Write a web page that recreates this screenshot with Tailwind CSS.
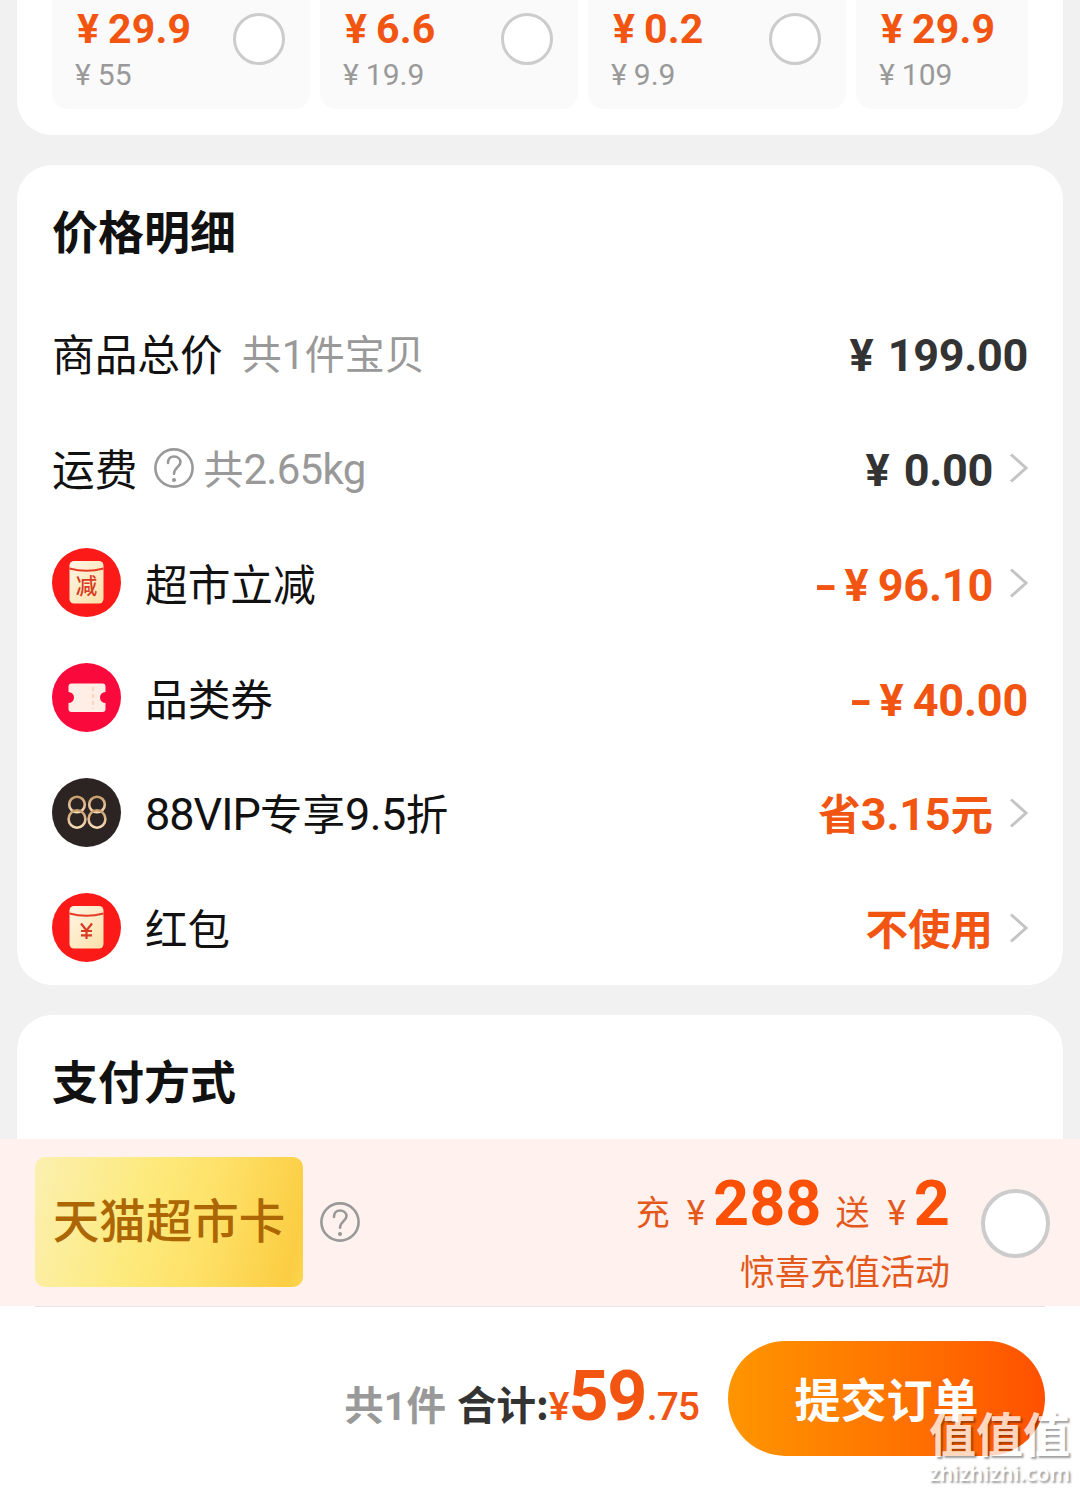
<!DOCTYPE html>
<html lang="zh-CN">
<head>
<meta charset="utf-8">
<title>确认订单</title>
<script src="https://cdn.jsdelivr.net/npm/@tailwindcss/browser@4"></script>
</head>
<body class="bg-[#f1f1f1]">
<svg class="hidden">
  <symbol id="chev" viewBox="0 0 20 32"><path d="M3 2.500 L18 16 L3 29.500" fill="none" stroke="#c4c4c4" stroke-width="3"/></symbol>
  <symbol id="help" viewBox="0 0 40 40"><circle cx="20" cy="20" r="18.600" fill="none" stroke="#999" stroke-width="2.600"/><path d="M14 15 C14 11 16.500 8.500 20 8.500 C23.700 8.500 26.500 11 26.500 14.300 C26.500 18.600 20 19.500 20 25.800" fill="none" stroke="#999" stroke-width="2.600" stroke-linecap="round"/><circle cx="20" cy="32" r="2.100" fill="#999"/></symbol>
</svg>
<div class="relative flex h-[1492px] w-[1080px] flex-col overflow-hidden font-['Noto_Sans_CJK_SC',sans-serif] text-[#111]">

  <section class="mx-[17px] flex h-[135px] shrink-0 gap-[10px] rounded-b-[35px] bg-white pr-[35px] pb-[26px] pl-[35px]">
    <div class="flex w-[258px] justify-between rounded-b-[16px] bg-[#fafafa] pt-[8px] pr-[25px] pl-[25px]">
      <div class="font-['Roboto',sans-serif]">
        <p class="text-[41px] leading-[42px] font-bold text-[#f15511]">¥<span class="ml-[9px] tracking-[0.2px]">29.9</span></p>
        <p class="mt-[6px] -ml-[2px] text-[30px] leading-[38px] text-[#999]">¥<span class="ml-[7px]">55</span></p>
      </div>
      <div class="mt-[5px] size-[52px] rounded-full border-3 border-[#ccc] bg-white"></div>
    </div>
    <div class="flex w-[258px] justify-between rounded-b-[16px] bg-[#fafafa] pt-[8px] pr-[25px] pl-[25px]">
      <div class="font-['Roboto',sans-serif]">
        <p class="text-[41px] leading-[42px] font-bold text-[#f15511]">¥<span class="ml-[9px] tracking-[0.2px]">6.6</span></p>
        <p class="mt-[6px] -ml-[2px] text-[30px] leading-[38px] text-[#999]">¥<span class="ml-[7px]">19.9</span></p>
      </div>
      <div class="mt-[5px] size-[52px] rounded-full border-3 border-[#ccc] bg-white"></div>
    </div>
    <div class="flex w-[258px] justify-between rounded-b-[16px] bg-[#fafafa] pt-[8px] pr-[25px] pl-[25px]">
      <div class="font-['Roboto',sans-serif]">
        <p class="text-[41px] leading-[42px] font-bold text-[#f15511]">¥<span class="ml-[9px] tracking-[0.2px]">0.2</span></p>
        <p class="mt-[6px] -ml-[2px] text-[30px] leading-[38px] text-[#999]">¥<span class="ml-[7px]">9.9</span></p>
      </div>
      <div class="mt-[5px] size-[52px] rounded-full border-3 border-[#ccc] bg-white"></div>
    </div>
    <div class="flex w-[172px] rounded-b-[16px] bg-[#fafafa] pt-[8px] pl-[25px]">
      <div class="font-['Roboto',sans-serif]">
        <p class="text-[41px] leading-[42px] font-bold text-[#f15511]">¥<span class="ml-[9px] tracking-[0.2px]">29.9</span></p>
        <p class="mt-[6px] -ml-[2px] text-[30px] leading-[38px] text-[#999]">¥<span class="ml-[7px]">109</span></p>
      </div>
    </div>
  </section>

  <section class="mx-[17px] mt-[30px] h-[820px] shrink-0 rounded-[35px] bg-white px-[35px]">
    <h2 class="h-[130px] pt-[34px] text-[46px] leading-[60px] font-bold">价格明细</h2>

    <div class="flex h-[115px] items-center">
      <span class="pb-[2px] text-[42.700px] leading-[60px]">商品总价</span>
      <span class="ml-[19px] pb-[2px] text-[40px] leading-[60px] text-[#999]">共<span class="font-['Roboto'] text-[41px] leading-none">1</span>件宝贝</span>
      <span class="ml-auto pb-[2px] text-[43px] leading-[60px] font-bold text-[#333]"><span class="font-['Roboto'] text-[45px] leading-none">¥<span class="ml-[14px] tracking-[-0.3px]">199.00</span></span></span>
    </div>
    <div class="flex h-[115px] items-center">
      <span class="pb-[2px] text-[42.700px] leading-[60px]">运费</span>
      <svg class="ml-[17px] size-[40px]"><use href="#help"/></svg>
      <span class="ml-[9px] pb-[2px] text-[40px] leading-[60px] text-[#999]">共<span class="font-['Roboto'] text-[42px] leading-none tracking-[-0.700px]">2.65kg</span></span>
      <span class="ml-auto pb-[2px] text-[43px] leading-[60px] font-bold text-[#333]"><span class="font-['Roboto'] text-[45px] leading-none">¥<span class="ml-[14px] tracking-[-0.3px]">0.00</span></span></span>
      <svg class="ml-[15px] h-[32px] w-[20px]"><use href="#chev"/></svg>
    </div>
    <div class="flex h-[115px] items-center">
      <svg class="size-[69px]" viewBox="0 0 69 69">
        <defs><linearGradient id="env" x1="0" y1="0" x2="1" y2="1"><stop offset="0" stop-color="#fff6e6"/><stop offset="1" stop-color="#fbe0a8"/></linearGradient></defs>
        <circle cx="34.500" cy="34.500" r="34.500" fill="#fb1a17"/>
        <rect x="17.500" y="13" width="34" height="42.500" rx="4.500" fill="url(#env)"/>
        <path d="M17.500 20.500 Q34.500 25 51.500 20.500" fill="none" stroke="#e33b24" stroke-width="2"/>
        <text x="34.500" y="46" text-anchor="middle" font-size="21.500" font-weight="500" fill="#d83a22">减</text>
      </svg>
      <span class="ml-[24px] pb-[2px] text-[42.700px] leading-[60px]">超市立减</span>
      <span class="ml-auto pb-[2px] text-[43px] leading-[60px] font-bold text-[#f15511]"><span class="font-['Roboto'] text-[45px] leading-none"><span class="inline-block scale-x-140">-</span><span class="ml-[10px]">¥</span><span class="ml-[9px] tracking-[-0.2px]">96.10</span></span></span>
      <svg class="ml-[15px] h-[32px] w-[20px]"><use href="#chev"/></svg>
    </div>
    <div class="flex h-[115px] items-center">
      <svg class="size-[69px]" viewBox="0 0 69 69">
        <circle cx="34.500" cy="34.500" r="34.500" fill="#fa0a3c"/>
        <path d="M19.500 20.500 H50.500 Q53.500 20.500 53.500 23.500 V29 A5.500 5.500 0 0 0 53.500 40 V46 Q53.500 49 50.500 49 H19.500 Q16.500 49 16.500 46 V40 A5.500 5.500 0 0 0 16.500 29 V23.500 Q16.500 20.500 19.500 20.500 Z" fill="#ffeee6"/>
        <path d="M41 24 V46" stroke="#f9d9c4" stroke-width="2.600" stroke-dasharray="4 3"/>
      </svg>
      <span class="ml-[24px] pb-[2px] text-[42.700px] leading-[60px]">品类券</span>
      <span class="ml-auto pb-[2px] text-[43px] leading-[60px] font-bold text-[#f15511]"><span class="font-['Roboto'] text-[45px] leading-none"><span class="inline-block scale-x-140">-</span><span class="ml-[10px]">¥</span><span class="ml-[9px] tracking-[-0.2px]">40.00</span></span></span>
    </div>
    <div class="flex h-[115px] items-center">
      <svg class="size-[69px]" viewBox="0 0 69 69">
        <defs><linearGradient id="gold" x1="0" y1="0" x2="0" y2="1"><stop offset="0" stop-color="#c99d6c"/><stop offset="1" stop-color="#f7dcba"/></linearGradient></defs>
        <circle cx="34.500" cy="34.500" r="34.500" fill="#2b2422"/>
        <g fill="none" stroke="url(#gold)" stroke-width="2.600"><circle cx="25" cy="26.500" r="7.800"/><ellipse cx="25" cy="41" rx="8.400" ry="8.700"/><circle cx="45" cy="26.500" r="7.800"/><ellipse cx="45" cy="41" rx="8.400" ry="8.700"/></g>
      </svg>
      <span class="ml-[24px] pb-[2px] text-[42.500px] leading-[60px]"><span class="font-['Roboto'] text-[45px] leading-none tracking-[-1px]">88VIP</span>专享<span class="font-['Roboto'] text-[45px] leading-none tracking-[-0.500px]">9.5</span>折</span>
      <span class="ml-auto pb-[2px] text-[42.500px] leading-[60px] font-bold text-[#f15511]">省<span class="font-['Roboto'] text-[45px] leading-none tracking-[-0.2px]">3.15</span>元</span>
      <svg class="ml-[15px] h-[32px] w-[20px]"><use href="#chev"/></svg>
    </div>
    <div class="flex h-[115px] items-center">
      <svg class="size-[69px]" viewBox="0 0 69 69">
        <circle cx="34.500" cy="34.500" r="34.500" fill="#fb1a17"/>
        <rect x="17.500" y="13" width="34" height="42.500" rx="4.500" fill="url(#env)"/>
        <path d="M17.500 20.500 Q34.500 25 51.500 20.500" fill="none" stroke="#e33b24" stroke-width="2"/>
        <path d="M29 30.500 L34.500 37.500 L40 30.500 M34.500 37.500 V46 M29 38 H40 M29 42.300 H40" fill="none" stroke="#d83a22" stroke-width="2.200"/>
      </svg>
      <span class="ml-[24px] pb-[2px] text-[42.500px] leading-[60px]">红包</span>
      <span class="ml-auto pb-[2px] text-[42.500px] leading-[60px] font-bold text-[#f15511]">不使用</span>
      <svg class="ml-[15px] h-[32px] w-[20px]"><use href="#chev"/></svg>
    </div>
  </section>

  <section class="mx-[17px] mt-[30px] h-[124px] shrink-0 rounded-t-[35px] bg-white px-[35px] pt-[34px]">
    <h2 class="text-[46px] leading-[60px] font-bold">支付方式</h2>
  </section>

  <section class="flex h-[167px] shrink-0 items-center bg-[#fff2ee] pr-[30px] pb-[2px] pl-[35px]">
    <div class="flex h-[130px] w-[268px] items-center justify-center rounded-[10px] bg-linear-[105deg,#fbf0b0,#fdea7c_40%,#fee066_65%,#fbcd42_94%,#fdd650] pb-[7px]">
      <span class="text-[46.500px] leading-[60px] font-medium text-[#ad6604]">天猫超市卡</span>
    </div>
    <svg class="ml-[17px] size-[40px]"><use href="#help"/></svg>
    <div class="mt-[23px] ml-auto flex flex-col items-end text-[#e4581c]">
      <p class="flex items-baseline text-[34px] leading-[66px]">充<span class="ml-[17px] font-['Roboto'] text-[35px] leading-none">¥</span><span class="ml-[8px] font-['Roboto'] text-[63px] leading-none font-bold text-[#fb5005]">288</span><span class="ml-[14px]">送</span><span class="ml-[18px] font-['Roboto'] text-[35px] leading-none">¥</span><span class="ml-[8px] font-['Roboto'] text-[63px] leading-none font-bold text-[#fb5005]">2</span></p>
      <p class="mt-px text-[35px] leading-[50px]">惊喜充值活动</p>
    </div>
    <div class="mt-[3px] ml-[31px] size-[69px] rounded-full border-4 border-[#ccc] bg-white"></div>
  </section>

  <footer class="flex grow flex-col bg-white px-[35px]">
    <div class="h-px bg-[#e6e3ea]"></div>
    <div class="mt-[34px] flex items-center justify-end">
      <p class="flex items-baseline pb-[3px] text-[39.500px] leading-[60px] font-bold"><span class="text-[#999]">共<span class="font-['Roboto'] leading-none">1</span>件</span><span class="ml-[11px] text-[#333]">合计:</span><span class="font-['Roboto'] text-[39px] leading-none font-medium tracking-[-1px] text-[#f15511]">¥<span class="text-[70px] font-bold tracking-[-1.500px]">59</span><span class="ml-[1px]">.75</span></span></p>
      <button class="ml-[29px] h-[115px] w-[317px] rounded-full bg-linear-to-r from-[#ff9500] to-[#ff5000] pb-[4px] text-[46px] leading-[60px] font-bold text-white">提交订单</button>
    </div>
  </footer>

  <div class="absolute top-[1405px] left-[929px] text-white opacity-75 [text-shadow:2px_2px_2px_rgba(0,0,0,0.5)]">
    <p class="text-[47px] leading-[54px] font-bold">值值值</p>
    <p class="mt-[2px] font-['Noto_Sans'] text-[21.500px] leading-[24px] font-semibold">zhizhizhi.com</p>
  </div>
</div>
</body>
</html>
